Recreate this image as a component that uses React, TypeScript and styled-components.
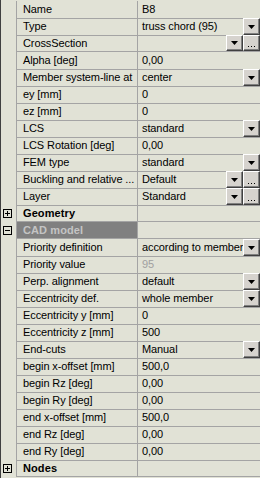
import React, { FC } from "react";
import styled, { createGlobalStyle } from "styled-components";

const GlobalStyle = createGlobalStyle`
  body {
    margin: 0;
    background: #e1e2d6;
    font-family: "Liberation Sans", Arial, sans-serif;
  }
`;

const Grid = styled.div`
  width: 260px;
  height: 478px;
  box-sizing: border-box;
  padding-top: 1px;
  border-left: 1px solid #404040;
  background: #e1e2d6;
  overflow: hidden;
`;

const Row = styled.div`
  display: grid;
  grid-template-columns: 16px 121px 1fr;
  height: 17px;
`;

const Gutter = styled.div`
  border-right: 1px solid #a4a4a4;
  display: flex;
  align-items: center;
  padding-left: 2px;
`;

const LabelCell = styled.div<{ $selected?: boolean; $bold?: boolean }>`
  box-sizing: border-box;
  border-right: 1px solid #a4a4a4;
  border-bottom: 1px solid #a4a4a4;
  background: ${(p) => (p.$selected ? "#808080" : "transparent")};
  color: ${(p) => (p.$selected ? "#c4c4c4" : "#000")};
  font-size: 11px;
  font-weight: ${(p) => (p.$bold ? "bold" : "normal")};
  letter-spacing: ${(p) => (p.$bold ? "0.1px" : "-0.1px")};
  line-height: 17px;
  padding-left: 6px;
  white-space: nowrap;
  overflow: hidden;
`;

const ValueCell = styled.div`
  box-sizing: border-box;
  border-bottom: 1px solid #a4a4a4;
  display: flex;
  align-items: stretch;
  min-width: 0;
`;

const ValueText = styled.span<{ $disabled?: boolean }>`
  flex: 1;
  min-width: 0;
  font-size: 11px;
  letter-spacing: -0.1px;
  line-height: 17px;
  padding-left: 4px;
  white-space: nowrap;
  overflow: hidden;
  color: ${(p) => (p.$disabled ? "#a0a0a0" : "#000")};
`;

const Button = styled.div`
  width: 17px;
  box-sizing: border-box;
  flex-shrink: 0;
  background: #d6d3ce;
  border-top: 1px solid #fff;
  border-left: 1px solid #fff;
  border-right: 1px solid #404040;
  border-bottom: 1px solid #404040;
  box-shadow: inset -1px -1px 0 #808080;
  display: flex;
  align-items: center;
  justify-content: center;
`;

const Dots = styled.div`
  display: flex;
  gap: 2px;
  align-self: flex-end;
  margin-bottom: 3px;
`;

const Dot = styled.span`
  width: 1px;
  height: 1px;
  background: #000;
`;

const ToggleBox = styled.div`
  width: 9px;
  height: 9px;
  box-sizing: border-box;
  border: 1px solid #000;
  display: flex;
  align-items: center;
  justify-content: center;
`;

type Control = "none" | "drop" | "both";

type Item =
  | { kind: "prop"; label: string; value: string; control?: Control; disabled?: boolean }
  | { kind: "cat"; label: string; open: boolean; selected?: boolean };

const items: Item[] = [
  { kind: "prop", label: "Name", value: "B8" },
  { kind: "prop", label: "Type", value: "truss chord (95)", control: "drop" },
  { kind: "prop", label: "CrossSection", value: "", control: "both" },
  { kind: "prop", label: "Alpha [deg]", value: "0,00" },
  { kind: "prop", label: "Member system-line at", value: "center", control: "drop" },
  { kind: "prop", label: "ey [mm]", value: "0" },
  { kind: "prop", label: "ez [mm]", value: "0" },
  { kind: "prop", label: "LCS", value: "standard", control: "drop" },
  { kind: "prop", label: "LCS Rotation [deg]", value: "0,00" },
  { kind: "prop", label: "FEM type", value: "standard", control: "drop" },
  { kind: "prop", label: "Buckling and relative ...", value: "Default", control: "both" },
  { kind: "prop", label: "Layer", value: "Standard", control: "both" },
  { kind: "cat", label: "Geometry", open: false },
  { kind: "cat", label: "CAD model", open: true, selected: true },
  { kind: "prop", label: "Priority definition", value: "according to member", control: "drop" },
  { kind: "prop", label: "Priority value", value: "95", disabled: true },
  { kind: "prop", label: "Perp. alignment", value: "default", control: "drop" },
  { kind: "prop", label: "Eccentricity def.", value: "whole member", control: "drop" },
  { kind: "prop", label: "Eccentricity y [mm]", value: "0" },
  { kind: "prop", label: "Eccentricity z [mm]", value: "500" },
  { kind: "prop", label: "End-cuts", value: "Manual", control: "drop" },
  { kind: "prop", label: "begin x-offset [mm]", value: "500,0" },
  { kind: "prop", label: "begin Rz [deg]", value: "0,00" },
  { kind: "prop", label: "begin Ry [deg]", value: "0,00" },
  { kind: "prop", label: "end x-offset [mm]", value: "500,0" },
  { kind: "prop", label: "end Rz [deg]", value: "0,00" },
  { kind: "prop", label: "end Ry [deg]", value: "0,00" },
  { kind: "cat", label: "Nodes", open: false },
];

const DropButton: FC = () => (
  <Button>
    <svg width="7" height="4" viewBox="0 0 7 4">
      <polygon points="0,0 7,0 3.5,4" fill="#000" />
    </svg>
  </Button>
);

const MoreButton: FC = () => (
  <Button>
    <Dots>
      <Dot />
      <Dot />
      <Dot />
    </Dots>
  </Button>
);

const Toggle: FC<{ open: boolean }> = ({ open }) => (
  <ToggleBox>
    <svg width="7" height="7" viewBox="0 0 7 7">
      <rect x="1" y="3" width="5" height="1" fill="#000" />
      {!open && <rect x="3" y="1" width="1" height="5" fill="#000" />}
    </svg>
  </ToggleBox>
);

const App: FC = () => {
  return (
    <>
      <GlobalStyle />
      <Grid>
        {items.map((item, idx) =>
          item.kind === "cat" ? (
            <Row key={idx}>
              <Gutter>
                <Toggle open={item.open} />
              </Gutter>
              <LabelCell $bold $selected={item.selected}>
                {item.label}
              </LabelCell>
              <ValueCell />
            </Row>
          ) : (
            <Row key={idx}>
              <Gutter />
              <LabelCell>{item.label}</LabelCell>
              <ValueCell>
                <ValueText $disabled={item.disabled}>{item.value}</ValueText>
                {(item.control === "drop" || item.control === "both") && <DropButton />}
                {item.control === "both" && <MoreButton />}
              </ValueCell>
            </Row>
          )
        )}
      </Grid>
    </>
  );
};

export default App;
